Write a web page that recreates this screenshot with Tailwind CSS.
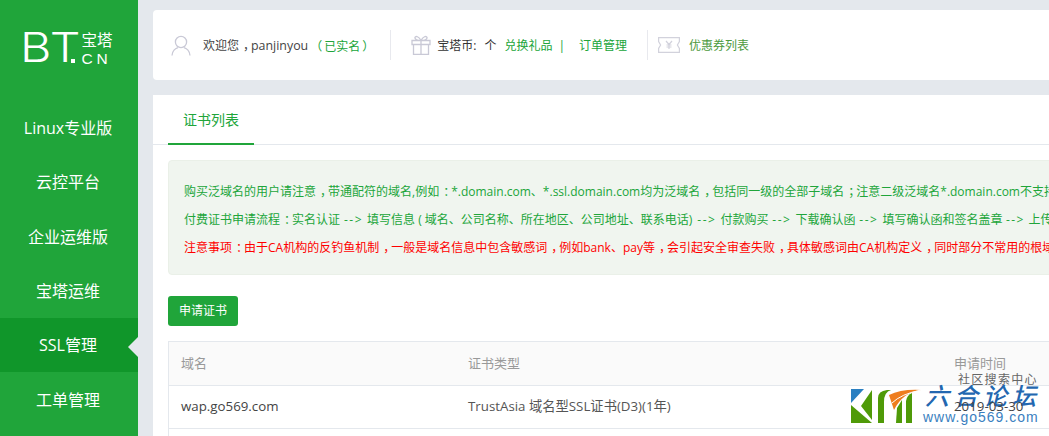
<!DOCTYPE html>
<html lang="en">
<head>
  <meta charset="UTF-8" />
  <meta name="viewport" content="width=device-width, initial-scale=1.0" />
  <title>SSL管理</title>
  <script src="https://cdn.jsdelivr.net/npm/@tailwindcss/browser@4"></script>
</head>
<body class="bg-[#e4e8ed] text-[#444] overflow-hidden font-['Open_Sans','Noto_Sans_CJK_SC',sans-serif]">
  <div class="relative flex w-[1049px] h-[436px] overflow-hidden">

    <!-- sidebar -->
    <aside class="w-[138px] h-full shrink-0 bg-[#20a53a] text-white">
      <div class="h-[100px] pt-[30px] pl-[20px] flex items-start">
        <span class="text-[41px] leading-[34px] font-['Inter'] font-light tracking-[1px] origin-left scale-x-[1.18]">BT</span>
        <span class="w-[4px] h-[4px] bg-white mt-[29px] -ml-[1px]"></span>
        <div class="ml-[6px] flex flex-col">
          <span class="text-[15.500px] leading-[18px] mt-[1px]">宝塔</span>
          <span class="text-[15.500px] leading-[15px] mt-[2px] tracking-[4px] font-['Liberation_Sans']">CN</span>
        </div>
      </div>
      <nav class="text-[16px] flex flex-col">
        <a class="h-[54.4px] pt-[2px] pr-[2px] flex items-center justify-center">Linux专业版</a>
        <a class="h-[54.4px] pt-[1px] pr-[2px] flex items-center justify-center">云控平台</a>
        <a class="h-[54.4px] pt-[2px] pr-[2px] flex items-center justify-center">企业运维版</a>
        <a class="h-[54.4px] pt-[2px] pr-[2px] flex items-center justify-center">宝塔运维</a>
        <a class="relative h-[54.4px] pt-[1px] pr-[2px] flex items-center justify-center bg-[#10962a]">SSL管理
          <span class="absolute right-0 top-[19px] border-y-[10px] border-r-[10px] border-y-transparent border-r-[#e4e8ed]"></span>
        </a>
        <a class="h-[54.4px] pt-[2px] pr-[2px] flex items-center justify-center">工单管理</a>
      </nav>
    </aside>

    <main class="flex-1 min-w-0 pl-[15px] pt-[10px]">
      <!-- user bar -->
      <div class="w-[920px] h-[70px] bg-white rounded-[4px] flex items-center text-[12px] whitespace-nowrap">
        <svg class="ml-[18px] w-[20px] h-[21px]" viewBox="0 0 20 21" fill="none" stroke="#c9c9d6" stroke-width="1.3">
          <circle cx="10" cy="7" r="5.6" />
          <path d="M1 20.500c.4-4.600 3.600-7.300 6-7.900M19 20.500c-.4-4.600-3.600-7.300-6-7.900" />
        </svg>
        <span class="ml-[12px] mt-[2px] text-[#444]">欢迎您<span class="inline-block translate-x-[4px]">，</span><span class="text-[12.400px]">panjinyou</span></span>
        <span class="ml-[2px] mt-[2px] text-[#20a53a]"><span class="font-['Noto_Sans_CJK_TC'] pr-[2px]">（</span>已实名<span class="font-['Noto_Sans_CJK_TC'] pl-[2px]">）</span></span>
        <span class="ml-[16px] w-px h-[30px] bg-[#e8e9ee]"></span>
        <svg class="ml-[20px] w-[20px] h-[20px]" viewBox="0 0 20 20" fill="none" stroke="#c9c9d6" stroke-width="1.3">
          <path d="M1 5.500h18v4H1zM2.500 9.500h15v10h-15zM10 5.500v14M10 5.500C8 1.500 4.500.5 4 2.500S7 5.500 10 5.500c3 0 6.500-1 6-3S12 1.500 10 5.500" />
        </svg>
        <span class="ml-[6px] mt-[2px] text-[#333]">宝塔币:</span>
        <span class="ml-[8px] mt-[2px] text-[#333]">个</span>
        <a class="ml-[8px] mt-[2px] text-[#20a53a]">兑换礼品</a>
        <span class="ml-[6px] mt-[2px] text-[#20a53a]">|</span>
        <a class="ml-[14px] mt-[2px] text-[#20a53a]">订单管理</a>
        <span class="ml-[20px] w-px h-[30px] bg-[#e8e9ee]"></span>
        <svg class="ml-[10px] w-[22px] h-[16px]" viewBox="0 0 22 16" fill="none" stroke="#d2d2dc" stroke-width="1.2">
          <path d="M.6.600h20.800v4l-2 3.400 2 3.400v4H.6v-4l2-3.400-2-3.400z" />
          <path d="M8 4l3 3.500L14 4M11 7.500V12M8.500 8h5M8.500 10h5" />
        </svg>
        <a class="ml-[9px] mt-[2px] text-[#4d9a3e]">优惠券列表</a>
      </div>

      <!-- certificate card -->
      <div class="w-[920px] h-[400px] mt-[15px] bg-white">
        <div class="h-[50px] border-b border-[#e4e8ed] pl-[15px] flex">
          <div class="w-[86px] h-[50px] flex items-center justify-center border-b-2 border-[#20a53a] text-[#20a53a] text-[14px]">证书列表</div>
        </div>
        <div class="px-[15px] pt-[15px]">
          <div class="h-[115px] w-[1000px] bg-[#f0f5ef] border border-[#eaf0e8] rounded-[4px] pl-[15px] pt-[17px] text-[12px] leading-[28px] whitespace-nowrap">
            <p class="text-[#20a53a]">购买泛域名的用户请注意<span class="inline-block translate-x-[4px]">，</span>带通配符的域名,例如<span class="inline-block translate-x-[4px]">：</span>*.domain.com、*.ssl.domain.com均为泛域名<span class="inline-block translate-x-[4px]">，</span>包括同一级的全部子域名<span class="inline-block translate-x-[4px]">；</span>注意二级泛域名*.domain.com不支持</p>
            <p class="text-[#20a53a]">付费证书申请流程<span class="inline-block translate-x-[4px]">：</span>实名认证<span class="inline-block w-[27px] text-center tracking-[1.5px]">--&gt;</span>填写信息 ( 域名、公司名称、所在地区、公司地址、联系电话)<span class="ml-[1px] inline-block w-[27px] text-center tracking-[1.5px]">--&gt;</span>付款购买<span class="inline-block w-[27px] text-center tracking-[1.5px]">--&gt;</span>下载确认函<span class="inline-block w-[27px] text-center tracking-[1.5px]">--&gt;</span>填写确认函和签名盖章<span class="inline-block w-[26px] text-center tracking-[1.5px]">--&gt;</span>上传</p>
            <p class="text-[#ff0000]">注意事项<span class="inline-block translate-x-[4px]">：</span>由于CA机构的反钓鱼机制<span class="inline-block translate-x-[4px]">，</span>一般是域名信息中包含敏感词<span class="inline-block translate-x-[4px]">，</span>例如bank、pay等<span class="inline-block translate-x-[4px]">，</span>会引起安全审查失败<span class="inline-block translate-x-[4px]">，</span>具体敏感词由CA机构定义<span class="inline-block translate-x-[4px]">，</span>同时部分不常用的根域</p>
          </div>
          <button class="mt-[21px] block w-[70px] h-[30px] bg-[#20a53a] rounded-[3px] text-white text-[12px]">申请证书</button>
          <div class="mt-[15px] w-[1000px] border border-[#e4e8ed] text-[13px]">
            <div class="h-[44px] bg-[#fafafa] border-b border-[#e4e8ed] flex items-center text-[#999]">
              <span class="w-[299px] pl-[12px]">域名</span>
              <span class="w-[486px]">证书类型</span>
              <span>申请时间</span>
            </div>
            <div class="h-[43px] border-b border-[#e4e8ed] flex items-center text-[#555] text-[13.300px]">
              <span class="w-[299px] pl-[12px] text-[#444]">wap.go569.com</span>
              <span class="w-[486px]">TrustAsia 域名型SSL证书(D3)(1年)</span>
              <span class="relative z-10 text-[#444]">2019-03-30</span>
            </div>
            <div class="h-[43px]"></div>
          </div>
        </div>
      </div>
    </main>

    <!-- forum watermark over the page -->
    <div class="absolute left-[851px] top-[372px] w-[198px] h-[64px]">
      <span class="absolute left-[107px] top-0 text-[12px] leading-[16px] tracking-[1.300px] text-[#666] whitespace-nowrap">社区搜索中心</span>
      <svg class="absolute left-0 top-[16px]" width="72" height="38" viewBox="0 0 72 38">
        <path d="M0 1h13L0 15z" fill="#2a7fc1" />
        <path d="M0 17l21 18H0z" fill="#4f9a08" />
        <path d="M21 2L10 18l11 14z" fill="#4f9a08" />
        <path d="M27 35V10q0-7 9-8h4q-7 2-7 12v21z" fill="#4f9a08" />
        <path d="M45 35l1-15 5-8v23z" fill="#4f9a08" />
        <path d="M55 35V13q1-6 6-8v30z" fill="#4f9a08" />
        <path d="M38 7q12-6 32-5-18 2-27 20z" fill="#ee7d1e" />
        <path d="M41 15q9-9 29-13" fill="none" stroke="#fff" stroke-width="1" />
      </svg>
      <span class="absolute left-[74px] top-[8px] text-[24px] leading-[32px] tracking-[5px] italic font-medium text-[#2367b0] whitespace-nowrap">六合论坛</span>
      <span class="absolute left-[72px] top-[37px] text-[14px] leading-[16px] tracking-[1px] text-[#3a7fc0] whitespace-nowrap font-['Liberation_Sans']">www.go569.com</span>
    </div>
  </div>
</body>
</html>
